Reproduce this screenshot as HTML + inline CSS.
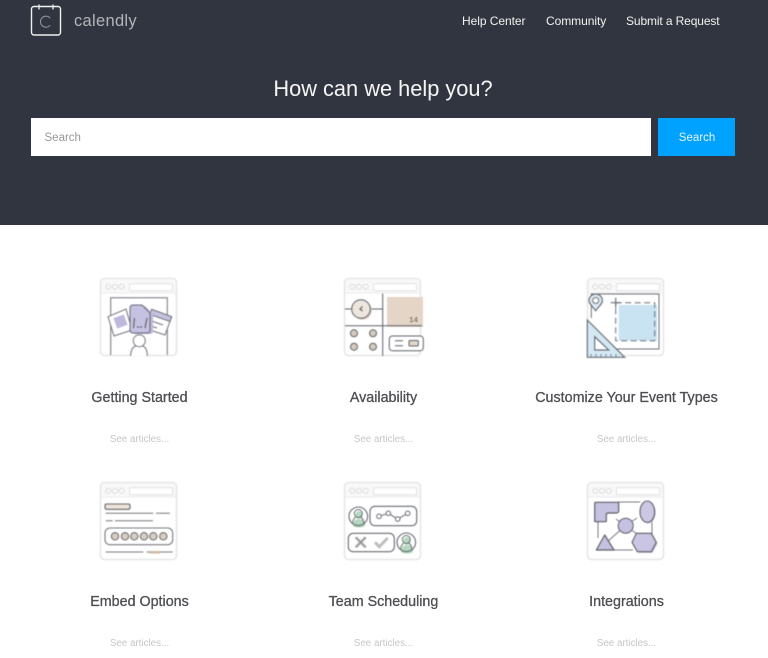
<!DOCTYPE html>
<html lang="en">
<head>
<meta charset="utf-8">
<title>Calendly Help Center</title>
<style>
html,body{margin:0;padding:0;background:#fff}
body{width:768px;height:658px;overflow:hidden;position:relative;font-family:"Liberation Sans",sans-serif}
#hero{position:absolute;left:0;top:0;width:768px;height:225px;background:#31353f}
.t{position:absolute;white-space:nowrap;margin:0;font-weight:normal}
.nav{color:#f2f2f2;font-size:12px;top:14px;line-height:14px}
.c{text-align:center}
.title{color:#4e4f53;font-size:14.300px;line-height:18px;width:243px;-webkit-text-stroke:.3px #4e4f53}
.see{color:#c6c6c6;font-size:9.800px;line-height:12px;width:243px}
svg{position:absolute;overflow:visible}
svg.i{filter:blur(.45px)}
</style>
</head>
<body>
<div id="hero"></div>
<svg style="left:30px;top:3px" width="34" height="34" viewBox="0 0 34 34" fill="none" stroke="#f0f0f0">
<rect x="1.500" y="3.500" width="29" height="28.500" rx="2.500" stroke-width="1.400"/>
<path d="M9 1.500v5M23 1.500v5" stroke-width="1.300"/>
<path d="M20.200 15.200A5.500 5.500 0 1 0 20.200 22.200" stroke="#8e9198" stroke-width="1.100"/>
</svg>
<div class="t" style="left:74px;top:11px;color:#b3b5b9;font-size:16.500px;line-height:20px;letter-spacing:.3px">calendly</div>
<div class="t nav" style="left:462px;letter-spacing:-.05px">Help Center</div>
<div class="t nav" style="left:546px;letter-spacing:-.05px">Community</div>
<div class="t nav" style="left:626px;letter-spacing:-.12px">Submit a Request</div>
<h1 class="t c" style="left:0;width:766px;top:75px;color:#f5f5f5;font-size:21.800px;line-height:28px">How can we help you?</h1>
<div style="position:absolute;left:31px;top:118px;width:620px;height:38px;background:#fff"></div>
<div class="t" style="left:44.500px;top:131px;color:#97989b;font-size:11.500px;line-height:14px">Search</div>
<div style="position:absolute;left:658px;top:118px;width:77px;height:38px;background:#00a2ff"></div>
<div class="t c" style="left:658.500px;width:77px;top:131px;color:#e6f5ff;font-size:11.500px;line-height:14px">Search</div>

<svg width="0" height="0" style="left:0;top:0">
<defs>
<g id="frame" fill="none" stroke="none">
<rect x=".5" y=".5" width="76" height="77" rx="4" fill="#fff" stroke="#e6e6e6" stroke-width="1.600"/>
<path d="M1.500 5c0-2.500 1-3.500 3.500-3.500h67c2.500 0 3.500 1 3.500 3.500v10H1.500z" fill="#f8f8f8" stroke="none"/>
<path d="M1 15H76" stroke="#efefef" stroke-width="1.200"/>
<circle cx="8.300" cy="8.700" r="2.500" stroke="#dcdcdc"/>
<circle cx="15" cy="8.700" r="2.500" stroke="#dcdcdc"/>
<circle cx="21.700" cy="8.700" r="2.500" stroke="#dcdcdc"/>
<rect x="29.500" y="5.700" width="43" height="7" rx="1" stroke="#e2e2e2" fill="#fff"/>
</g>
</defs>
</svg>

<!-- Getting Started -->
<svg class="i" style="left:100px;top:278px" width="78" height="79" viewBox="0 0 78 79" fill="none" stroke="#73757c" stroke-width="1">
<use href="#frame"/>
<path d="M10.700 77V19.700H67.300V77"/>
<path d="M8 38.700L26 31l6 21-18 6z" fill="#fff"/>
<rect x="15" y="38" width="11" height="11" transform="rotate(-20 20.500 43.500)" fill="#bdb8dc" stroke="none"/>
<path d="M51.700 31.300L71.700 38.700 65 57 46.700 51z" fill="#fff"/>
<path d="M51.700 31.300L71.700 38.700 70 43.500 50 36.500z" fill="#c5c1e1"/>
<path d="M49 42l14 5M48 47l9 3"/>
<path d="M33 31c0-2 1-3 3-3h9l8 8v17c0 2-1 3-3 3H36c-2 0-3-1-3-3z" fill="#bdb8dc" stroke="none"/>
<path d="M30 30c0-2 1-3 3-3h9l8 8v17c0 2-1 3-3 3H33c-2 0-3-1-3-3z" fill="#c5c1e1" stroke="#6a6a74"/>
<path d="M34.500 40l-1 10M47 40l-2 10" stroke="#555"/>
<path d="M37 49h6" stroke="#555" stroke-dasharray="2 1"/>
<path d="M30.700 78c0-6 2-9 5-10h7c3 1 4.600 4 4.600 10" fill="#fff"/>
<circle cx="39.300" cy="62.700" r="6" fill="#fff"/>
</svg>

<!-- Availability -->
<svg class="i" style="left:344px;top:278px" width="80" height="79" viewBox="0 0 80 79" fill="none" stroke="#5f636b" stroke-width="1">
<use href="#frame"/>
<rect x="43" y="19" width="36" height="30" fill="#e5d5c6" stroke="none"/>
<path d="M38.700 15.500V78M1 47.700H78M1 31h7M26.500 31H38.700"/>
<circle cx="18.500" cy="32.500" r="9.300" fill="#ddd0c5" stroke="none"/>
<circle cx="17" cy="31" r="9.300" fill="#eee5dc"/>
<path d="M18.500 28.500L16 31l2.500 2" stroke-width="1.200"/>
<text x="65" y="44" font-family="Liberation Mono,monospace" font-size="7.500" fill="#555" stroke="none">14</text>
<g fill="#d6cabf" stroke="#666">
<circle cx="10" cy="55.300" r="3.500"/><circle cx="29" cy="55.300" r="3.500"/>
<circle cx="10" cy="68.700" r="3.500"/><circle cx="29" cy="68.700" r="3.500"/>
</g>
<rect x="45.300" y="58" width="34" height="14.700" rx="3" fill="#fff"/>
<path d="M51 62.700h8M51 67.700h8"/>
<rect x="65" y="62.500" width="9.300" height="5.500" rx="1" fill="#e5d5c6"/>
</svg>

<!-- Customize -->
<svg class="i" style="left:587px;top:278px" width="78" height="84" viewBox="0 0 78 84" fill="none" stroke="#6b7078" stroke-width="1">
<use href="#frame"/>
<path d="M4.300 40V16H72V71H30"/>
<rect x="31.700" y="27" width="38.300" height="35.700" fill="#c9e3f2" stroke="none"/>
<rect x="28.700" y="24.700" width="39" height="38" stroke-dasharray="6 3.500"/>
<path d="M28.700 19.700v10M23.700 24.700h10" stroke-width="1.200"/>
<path d="M8.700 32.700c-4-5-6.700-7.500-6.700-10a6.700 6.700 0 0 1 13.400 0c0 2.500-2.700 5-6.700 10z" fill="#dcedf6" stroke-width="1.200"/>
<circle cx="8.700" cy="22.500" r="3" fill="#fff"/>
<path fill-rule="evenodd" d="M.3 42L37.700 79.300H.3zM7.700 58.700V72H21.700z" fill="#d4e9f5" stroke-width="1.200"/>
<path d="M4 79v-3M9 79v-3M14 79v-3M19 79v-3M24 79v-3M29 79v-3" stroke-width=".8"/>
</svg>

<!-- Embed Options -->
<svg class="i" style="left:100px;top:482px" width="78" height="79" viewBox="0 0 78 79" fill="none" stroke="#77797f" stroke-width="1">
<use href="#frame"/>
<rect x="5" y="22" width="25" height="5.300" rx="1.500" fill="#eee4da" stroke="#666" stroke-width="1.100"/>
<path d="M5.700 31.300h47.600M56 31.300h14M5.700 38.700h7M15 38.700h38"/>
<rect x="5" y="46" width="67.700" height="16.700" rx="5" stroke-width="1.100"/>
<g fill="#d8cdc2" stroke="#666">
<circle cx="15" cy="54.300" r="3.700"/><circle cx="25" cy="54.300" r="3.700"/><circle cx="34.300" cy="54.300" r="3.700"/><circle cx="44" cy="54.300" r="3.700"/><circle cx="53.300" cy="54.300" r="3.700"/><circle cx="63.300" cy="54.300" r="3.700"/>
</g>
<path d="M5.700 70h37.600M46.700 70h26"/>
<rect x="49" y="69" width="11.700" height="2.500" rx="1.200" fill="#cdb9a3" stroke="none"/>
</svg>

<!-- Team Scheduling -->
<svg class="i" style="left:344px;top:482px" width="78" height="79" viewBox="0 0 78 79" fill="none" stroke="#666a70" stroke-width="1">
<use href="#frame"/>
<circle cx="15" cy="33" r="3.800" fill="#b5d8c0" stroke="none"/>
<path d="M9 44c0-5 2-7 6-7s6 2 6 7c-2 2-10 2-12 0z" fill="#b5d8c0" stroke="none"/>
<circle cx="14.300" cy="34.300" r="9.300" stroke-width="1.100"/>
<path d="M11.500 35c-2 2-3 4-3 7M17 35c2 2 3 4 3 7M14.300 27.500a4 4 0 0 1 0 8 4 4 0 0 1 0-8z" stroke-width=".9"/>
<rect x="26" y="24.300" width="46.700" height="19.400" rx="5" stroke-width="1.100"/>
<path d="M35 34.300l9.300-3 9.400 5.700 10-5.700"/>
<g fill="#fff"><circle cx="35" cy="34.300" r="2.300"/><circle cx="44.300" cy="31.300" r="2.300"/><circle cx="53.700" cy="37" r="2.300"/><circle cx="63.700" cy="31.300" r="2.300"/></g>
<rect x="4.300" y="51.300" width="46" height="18.400" rx="5" stroke-width="1.100"/>
<path d="M11.700 55.300l10 10M21.700 55.300l-10 10" stroke="#c9c9c9" stroke-width="3"/>
<path d="M11.700 55.300l10 10M21.700 55.300l-10 10" stroke="#777" stroke-width=".8"/>
<path d="M31 60.300l4.300 4.400 8.400-8.700" stroke="#bdbdbd" stroke-width="3"/>
<circle cx="63" cy="59" r="3.800" fill="#b5d8c0" stroke="none"/>
<path d="M57 70c0-5 2-7 6-7s6 2 6 7c-2 2-10 2-12 0z" fill="#b5d8c0" stroke="none"/>
<circle cx="62.300" cy="60.300" r="9.300" stroke-width="1.100"/>
<path d="M59.500 61c-2 2-3 4-3 7M65 61c2 2 3 4 3 7M62.300 53.500a4 4 0 0 1 0 8 4 4 0 0 1 0-8z" stroke-width=".9"/>
</svg>

<!-- Integrations -->
<svg class="i" style="left:587px;top:482px" width="78" height="79" viewBox="0 0 78 79" fill="none" stroke="#5f6168" stroke-width="1">
<use href="#frame"/>
<path d="M11 40V56M31 20H53M65 40V52M27 68H46" stroke="#77797f"/>
<path d="M29 37L38 44M50 36L38 44M20 60L38 44M55 55L38 44" stroke="#77797f"/>
<path d="M7.700 21.300c0-.6.400-1 1-1h22c.6 0 1 .4 1 1v7.700c0 1-1 2-2 2h-8c-2 0-2.400 1-2.400 2v5.700c0 .6-.4 1-1 1H8.700c-.6 0-1-.4-1-1z" fill="#c5c1e1" stroke-width="1.200"/>
<ellipse cx="61.300" cy="30.500" rx="7.300" ry="10.700" fill="#bdb8dc" stroke="none"/>
<ellipse cx="60.300" cy="29.700" rx="7.300" ry="10.700" fill="#cbc7e4" stroke-width="1.100"/>
<circle cx="38.700" cy="43.700" r="7.500" fill="#c5c1e1"/>
<path d="M17.700 53L27 68H9.300z" fill="#c5c1e1" stroke-width="1.200" stroke-linejoin="round"/>
<path d="M50.500 52.500h15l5 9-5 9.400h-14l-5.300-9.400z" fill="#bdb8dc" stroke="none"/>
<path d="M49.300 51.300h15l5 9-5 9.400h-14l-5.300-9.400z" fill="#c9c5e3" stroke-width="1.100" stroke-linejoin="round"/>
</svg>

<h2 class="t title c" style="left:18px;top:389px">Getting Started</h2>
<h2 class="t title c" style="left:262px;top:389px">Availability</h2>
<h2 class="t title c" style="left:505px;top:389px">Customize Your Event Types</h2>
<h2 class="t title c" style="left:18px;top:593px">Embed Options</h2>
<h2 class="t title c" style="left:262px;top:593px">Team Scheduling</h2>
<h2 class="t title c" style="left:505px;top:593px">Integrations</h2>
<div class="t see c" style="left:18px;top:433.500px">See articles...</div>
<div class="t see c" style="left:262px;top:433.500px">See articles...</div>
<div class="t see c" style="left:505px;top:433.500px">See articles...</div>
<div class="t see c" style="left:18px;top:637.500px">See articles...</div>
<div class="t see c" style="left:262px;top:637.500px">See articles...</div>
<div class="t see c" style="left:505px;top:637.500px">See articles...</div>
</body>
</html>
